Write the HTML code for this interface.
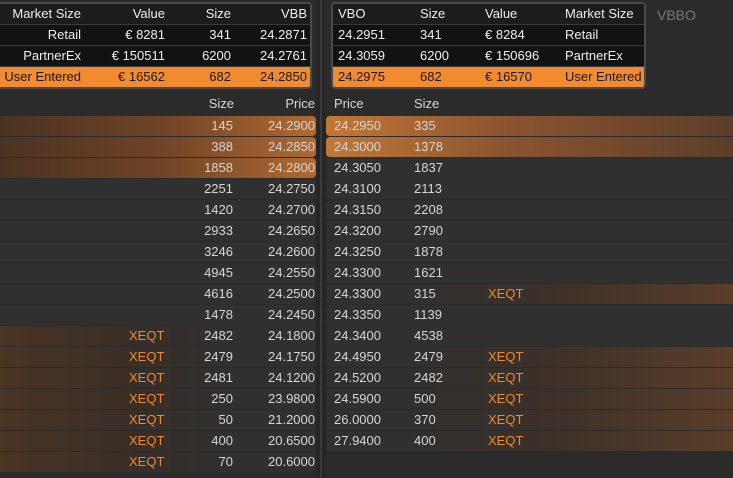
<!DOCTYPE html><html><head><style>
*{margin:0;padding:0;box-sizing:border-box}
body{width:733px;height:478px;background:#2b2b2b;font-family:"Liberation Sans",sans-serif;font-size:13px;color:#d6d6d6;position:relative;overflow:hidden}
.a{position:absolute;white-space:nowrap}
.r{position:absolute;height:20px;background:#303030}
.t{position:absolute;line-height:20px;top:0;white-space:nowrap}
.tb{position:absolute;border:2px solid #4a4a4a;border-radius:4px;background:#121212;overflow:hidden}
.tr{position:absolute;left:0;right:0;height:21px;line-height:21px;color:#eee;border-bottom:1px solid #3a3a3a}
.hd{background:#1c1c1c}
.ue{background:#f28a30;color:#1a1a1a}
.x{color:#f08a2c}
</style></head><body>
<div class="a" style="left:316px;top:0;width:10px;height:478px;background:#262626"></div>
<div class="a" style="left:320px;top:0;width:2px;height:478px;background:#3a3a3a"></div>

<div class="tb" style="left:-4px;top:2px;width:316px;height:87px">
<div class="tr hd" style="top:0"><span class="t" style="right:229px">Market Size</span><span class="t" style="right:145px">Value</span><span class="t" style="right:79px">Size</span><span class="t" style="right:3px">VBB</span></div>
<div class="tr" style="top:21px"><span class="t" style="right:229px">Retail</span><span class="t" style="right:145px">€ 8281</span><span class="t" style="right:79px">341</span><span class="t" style="right:3px">24.2871</span></div>
<div class="tr" style="top:42px"><span class="t" style="right:229px">PartnerEx</span><span class="t" style="right:145px">€ 150511</span><span class="t" style="right:79px">6200</span><span class="t" style="right:3px">24.2761</span></div>
<div class="tr ue" style="top:63px;height:22px"><span class="t" style="right:229px">User Entered</span><span class="t" style="right:145px">€ 16562</span><span class="t" style="right:79px">682</span><span class="t" style="right:3px">24.2850</span></div>
</div>

<div class="tb" style="left:331px;top:2px;width:315px;height:87px">
<div class="tr hd" style="top:0"><span class="t" style="left:5px">VBO</span><span class="t" style="left:87px">Size</span><span class="t" style="left:152px">Value</span><span class="t" style="left:232px">Market Size</span></div>
<div class="tr" style="top:21px"><span class="t" style="left:5px">24.2951</span><span class="t" style="left:87px">341</span><span class="t" style="left:152px">€ 8284</span><span class="t" style="left:232px">Retail</span></div>
<div class="tr" style="top:42px"><span class="t" style="left:5px">24.3059</span><span class="t" style="left:87px">6200</span><span class="t" style="left:152px">€ 150696</span><span class="t" style="left:232px">PartnerEx</span></div>
<div class="tr ue" style="top:63px;height:22px"><span class="t" style="left:5px">24.2975</span><span class="t" style="left:87px">682</span><span class="t" style="left:152px">€ 16570</span><span class="t" style="left:232px">User Entered</span></div>
</div>
<div class="a" style="left:657px;top:5px;line-height:20px;color:#777;font-size:14px">VBBO</div>

<div class="a" style="left:0;top:94px;width:234px;text-align:right;line-height:20px">Size</div>
<div class="a" style="left:0;top:94px;width:315px;text-align:right;line-height:20px">Price</div>
<div class="a" style="left:334px;top:94px;line-height:20px">Price</div>
<div class="a" style="left:414px;top:94px;line-height:20px">Size</div>

<div id="L"></div><div id="R"></div>
<script>
var L=[["145","24.2900",1],["388","24.2850",1],["1858","24.2800",1],["2251","24.2750"],["1420","24.2700"],["2933","24.2650"],["3246","24.2600"],["4945","24.2550"],["4616","24.2500"],["1478","24.2450"],["2482","24.1800",2],["2479","24.1750",2],["2481","24.1200",2],["250","23.9800",2],["50","21.2000",2],["400","20.6500",2],["70","20.6000",2]];
var R=[["24.2950","335",1],["24.3000","1378",1],["24.3050","1837"],["24.3100","2113"],["24.3150","2208"],["24.3200","2790"],["24.3250","1878"],["24.3300","1621"],["24.3300","315",2],["24.3350","1139"],["24.3400","4538"],["24.4950","2479",2],["24.5200","2482",2],["24.5900","500",2],["26.0000","370",2],["27.9400","400",2],["",""]];
var h="";
L.forEach(function(d,i){var y=116+i*21,bg="#303030";
if(d[2]==1)bg="linear-gradient(90deg,#4a3222,#6e4327 50%,#b06a32)";
if(d[2]==2)bg="linear-gradient(90deg,#4a3424,#3a2e26 40%,#303030 70%)";
h+='<div class="r" style="left:0;top:'+y+'px;width:316px;border-radius:0 4px 4px 0;background:'+bg+'">'+(d[2]==2?'<span class="t x" style="left:129px">XEQT</span>':'')+'<span class="t" style="right:83px">'+d[0]+'</span><span class="t" style="right:1px">'+d[1]+'</span></div>';});
R.forEach(function(d,i){var y=116+i*21,bg="#303030";
if(d[2]==1)bg="linear-gradient(90deg,#c27836,#8a5330 45%,#5c3e2a)";
if(d[2]==2)bg="linear-gradient(90deg,#303030 20%,#3c3028 55%,#5a3e2a)";
if(d[0]=="")bg="#2b2b2b";
h+='<div class="r" style="left:326px;top:'+y+'px;width:407px;border-radius:4px 0 0 4px;background:'+bg+'"><span class="t" style="left:8px">'+d[0]+'</span><span class="t" style="left:88px">'+d[1]+'</span>'+(d[2]==2?'<span class="t x" style="left:162px">XEQT</span>':'')+'</div>';});
document.getElementById("L").innerHTML=h;
</script>
</body></html>
